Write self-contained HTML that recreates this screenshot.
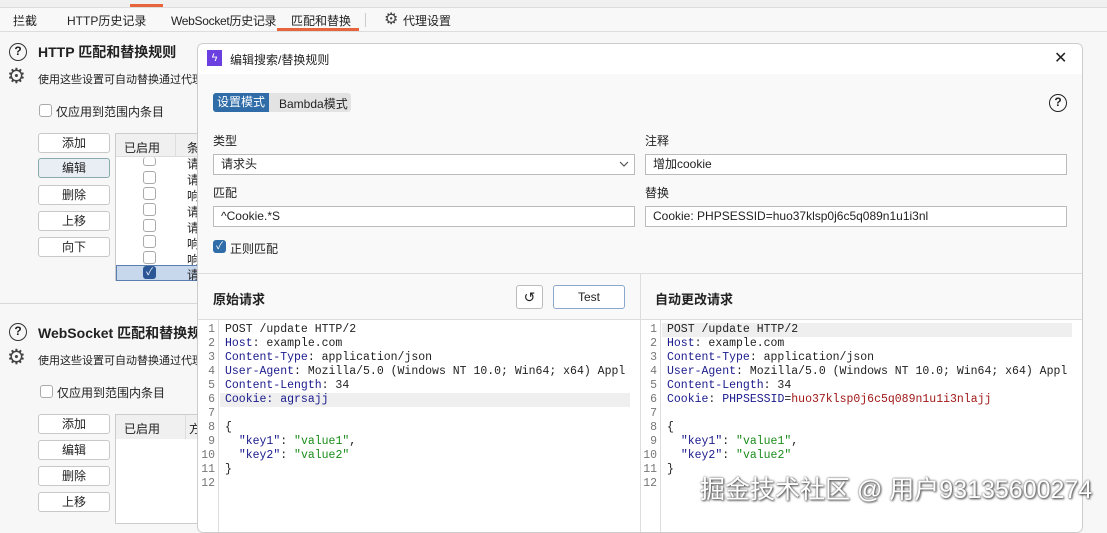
<!DOCTYPE html>
<html><head><meta charset="utf-8"><style>
*{box-sizing:border-box;margin:0;padding:0}
body{width:1107px;height:516px;overflow:hidden;background:#f7f7f7;font-family:"Liberation Sans","Noto Sans CJK SC",sans-serif;font-size:12px;color:#222;position:relative}
.abs{position:absolute}
.btn{position:absolute;left:38px;width:72px;height:20px;border:1px solid #c8c8c8;border-radius:3px;background:#fff;text-align:center;line-height:18px;font-size:12px}
.cb{position:absolute;width:13px;height:13px;border:1px solid #aaa;border-radius:3px;background:#fff}
.inp{position:absolute;height:21px;border:1px solid #bbb;background:#fff;padding-left:7px;line-height:19px;font-size:12px}
.code{font-family:"Liberation Mono",monospace;font-size:11.5px;line-height:14px;white-space:pre}
.ln{position:absolute;width:20px;text-align:right;color:#777;font-family:"Liberation Mono",monospace;font-size:11.5px;line-height:14px;white-space:pre}
.k{color:#1a1a8c}.s{color:#1a8c1a}.r{color:#a01818}
</style></head><body>
<div class="abs" style="left:0;top:0;width:1107px;height:8px;background:#f0f0f0;border-bottom:1px solid #ddd"></div>
<div class="abs" style="left:130px;top:4px;width:33px;height:3px;background:#e8643c"></div>
<div class="abs" style="left:0;top:8px;width:1107px;height:24px;background:#f8f8f8;border-bottom:1px solid #ddd"></div>
<div class="abs" style="left:13px;top:12px">拦截</div>
<div class="abs" style="left:67px;top:12px">HTTP历史记录</div>
<div class="abs" style="left:171px;top:12px;letter-spacing:-0.3px">WebSocket历史记录</div>
<div class="abs" style="left:291px;top:12px">匹配和替换</div>
<div class="abs" style="left:277px;top:28px;width:82px;height:3px;background:#e8643c"></div>
<div class="abs" style="left:365px;top:13px;width:1px;height:14px;background:#ccc"></div>
<div class="abs" style="left:384px;top:9px;font-size:16px;color:#444">⚙</div>
<div class="abs" style="left:403px;top:12px">代理设置</div>
<div class="abs" style="left:9px;top:43px;width:18px;height:18px;border:1.6px solid #333;border-radius:50%;text-align:center;line-height:15px;font-size:12px;font-weight:bold">?</div>
<div class="abs" style="left:38px;top:42px;font-size:14px;font-weight:bold">HTTP 匹配和替换规则</div>
<div class="abs" style="left:7px;top:64px;font-size:21px;color:#444">⚙</div>
<div class="abs" style="left:38px;top:71px;font-size:11px">使用这些设置可自动替换通过代理</div>
<div class="cb" style="left:39px;top:104px"></div>
<div class="abs" style="left:56px;top:103px">仅应用到范围内条目</div>
<div class="btn" style="top:133px">添加</div>
<div class="btn" style="top:158px;background:#e9eef5;border-color:#8aa">编辑</div>
<div class="btn" style="top:185px">删除</div>
<div class="btn" style="top:211px">上移</div>
<div class="btn" style="top:237px">向下</div>
<div class="abs" style="left:115px;top:133px;width:90px;height:148px;background:#fff;border:1px solid #ccc"></div>
<div class="abs" style="left:116px;top:134px;width:89px;height:23px;background:#f0f0f0;border-bottom:1px solid #ddd"></div>
<div class="abs" style="left:124px;top:139px">已启用</div>
<div class="abs" style="left:175px;top:134px;width:1px;height:23px;background:#ddd"></div>
<div class="abs" style="left:187px;top:139px">条</div>
<div class="cb" style="left:143px;top:157px;height:9px;border-top:none"></div>
<div class="cb" style="left:143px;top:171px"></div><div class="cb" style="left:143px;top:187px"></div><div class="cb" style="left:143px;top:203px"></div><div class="cb" style="left:143px;top:219px"></div><div class="cb" style="left:143px;top:235px"></div><div class="cb" style="left:143px;top:251px"></div>
<div class="abs" style="left:187px;top:156px;line-height:16px">请<br>请<br>响<br>请<br>请<br>响<br>响</div>
<div class="abs" style="left:116px;top:265px;width:89px;height:16px;background:#c7d7ec;border:1px solid #5a7fb0"></div>
<div class="abs" style="left:143px;top:266px;width:13px;height:13px;background:#2b5797;border-radius:3px;color:#fff;font-size:10px;text-align:center;line-height:13px">✓</div>
<div class="abs" style="left:187px;top:266px">请</div>
<div class="abs" style="left:0;top:303px;width:200px;height:1px;background:#d8d8d8"></div>
<div class="abs" style="left:9px;top:323px;width:18px;height:18px;border:1.6px solid #333;border-radius:50%;text-align:center;line-height:15px;font-size:12px;font-weight:bold">?</div>
<div class="abs" style="left:38px;top:323px;font-size:14px;font-weight:bold">WebSocket 匹配和替换规则</div>
<div class="abs" style="left:7px;top:345px;font-size:21px;color:#444">⚙</div>
<div class="abs" style="left:38px;top:352px;font-size:11px">使用这些设置可自动替换通过代理</div>
<div class="cb" style="left:40px;top:385px"></div>
<div class="abs" style="left:57px;top:384px">仅应用到范围内条目</div>
<div class="btn" style="top:414px">添加</div>
<div class="btn" style="top:440px">编辑</div>
<div class="btn" style="top:466px">删除</div>
<div class="btn" style="top:492px">上移</div>
<div class="abs" style="left:115px;top:414px;width:90px;height:110px;background:#fff;border:1px solid #ccc"></div>
<div class="abs" style="left:116px;top:415px;width:89px;height:24px;background:#f0f0f0"></div>
<div class="abs" style="left:124px;top:420px">已启用</div>
<div class="abs" style="left:185px;top:415px;width:1px;height:24px;background:#ddd"></div>
<div class="abs" style="left:189px;top:420px">方</div>
<div class="abs" style="left:197px;top:43px;width:886px;height:490px;background:#f9f9f9;border:1px solid #ccc;border-radius:6px;overflow:hidden">
 <div class="abs" style="left:0;top:0;width:886px;height:30px;background:#fff"></div>
 <div class="abs" style="left:9px;top:6px;width:15px;height:16px;background:#6b3fe0;color:#fff;font-size:11px;text-align:center;line-height:16px">ϟ</div>
 <div class="abs" style="left:32px;top:7px">编辑搜索/替换规则</div>
 <div class="abs" style="left:856px;top:4px;font-size:16px;color:#222">✕</div>
 <div class="abs" style="left:15px;top:49px;width:138px;height:19px;background:#e3e3e3;border-radius:3px"></div>
 <div class="abs" style="left:15px;top:49px;width:56px;height:19px;background:#2f6ca8;border-radius:3px 0 0 3px;color:#fff;text-align:center;line-height:19px">设置模式</div>
 <div class="abs" style="left:81px;top:51px">Bambda模式</div>
 <div class="abs" style="left:851px;top:50px;width:18px;height:18px;border:1.8px solid #222;border-radius:50%;text-align:center;line-height:14px;font-weight:bold">?</div>
 <div class="abs" style="left:15px;top:88px">类型</div>
 <div class="inp" style="left:15px;top:110px;width:422px">请求头<svg style="position:absolute;right:5px;top:6px" width="10" height="6" viewBox="0 0 10 6"><path d="M1 1L5 5L9 1" fill="none" stroke="#555" stroke-width="1.2"/></svg></div>
 <div class="abs" style="left:15px;top:140px">匹配</div>
 <div class="inp" style="left:15px;top:162px;width:422px">^Cookie.*S</div>
 <div class="abs" style="left:15px;top:196px;width:13px;height:13px;background:#2f6ca8;border-radius:3px;color:#fff;font-size:10px;text-align:center;line-height:13px">✓</div>
 <div class="abs" style="left:32px;top:196px">正则匹配</div>
 <div class="abs" style="left:447px;top:88px">注释</div>
 <div class="inp" style="left:447px;top:110px;width:422px">增加cookie</div>
 <div class="abs" style="left:447px;top:140px">替换</div>
 <div class="inp" style="left:447px;top:162px;width:422px">Cookie: PHPSESSID=huo37klsp0j6c5q089n1u1i3nl</div>
 <div class="abs" style="left:0;top:229px;width:886px;height:1px;background:#ddd"></div>
 <div class="abs" style="left:442px;top:229px;width:1px;height:270px;background:#ddd"></div>
 <div class="abs" style="left:15px;top:245px;font-size:13px;font-weight:bold">原始请求</div>
 <div class="abs" style="left:318px;top:241px;width:27px;height:24px;border:1px solid #bbb;border-radius:3px;background:#fff;text-align:center;line-height:22px;font-size:14px">↺</div>
 <div class="abs" style="left:355px;top:241px;width:72px;height:24px;border:1px solid #8aa8cc;border-radius:3px;background:#fff;text-align:center;line-height:22px">Test</div>
 <div class="abs" style="left:457px;top:245px;font-size:13px;font-weight:bold">自动更改请求</div>
 <div class="abs" style="left:0;top:275px;width:886px;height:1px;background:#ddd"></div>
 <div class="abs" style="left:0;top:276px;width:442px;height:220px;background:#fff"></div>
 <div class="abs" style="left:443px;top:276px;width:443px;height:220px;background:#fff"></div>
 <div class="abs" style="left:20px;top:276px;width:1px;height:220px;background:#ddd"></div>
 <div class="abs" style="left:462px;top:276px;width:1px;height:220px;background:#ddd"></div>
 <div class="ln" style="left:-3px;top:279px">1
2
3
4
5
6
7
8
9
10
11
12</div>
 <div class="abs" style="left:22px;top:349px;width:410px;height:14px;background:#efefef"></div>
 <div class="abs code" style="left:27px;top:279px">POST /update HTTP/2
<span class="k">Host</span>: example.com
<span class="k">Content-Type</span>: application/json
<span class="k">User-Agent</span>: Mozilla/5.0 (Windows NT 10.0; Win64; x64) Appl
<span class="k">Content-Length</span>: 34
<span class="k">Cookie: agrsajj</span>

{
  <span class="k">"key1"</span>: <span class="s">"value1"</span>,
  <span class="k">"key2"</span>: <span class="s">"value2"</span>
}</div>
 <div class="ln" style="left:439px;top:279px">1
2
3
4
5
6
7
8
9
10
11
12</div>
 <div class="abs" style="left:464px;top:279px;width:410px;height:14px;background:#efefef"></div>
 <div class="abs code" style="left:469px;top:279px">POST /update HTTP/2
<span class="k">Host</span>: example.com
<span class="k">Content-Type</span>: application/json
<span class="k">User-Agent</span>: Mozilla/5.0 (Windows NT 10.0; Win64; x64) Appl
<span class="k">Content-Length</span>: 34
<span class="k">Cookie</span>: <span class="k">PHPSESSID</span>=<span class="r">huo37klsp0j6c5q089n1u1i3nlajj</span>

{
  <span class="k">"key1"</span>: <span class="s">"value1"</span>,
  <span class="k">"key2"</span>: <span class="s">"value2"</span>
}</div>
</div>
<div class="abs" style="left:700px;top:470px;font-size:25px;color:#fff;text-shadow:0 0 2px #555,1px 1px 2px #444;white-space:nowrap">掘金技术社区 @ 用户93135600274</div>
</body></html>
